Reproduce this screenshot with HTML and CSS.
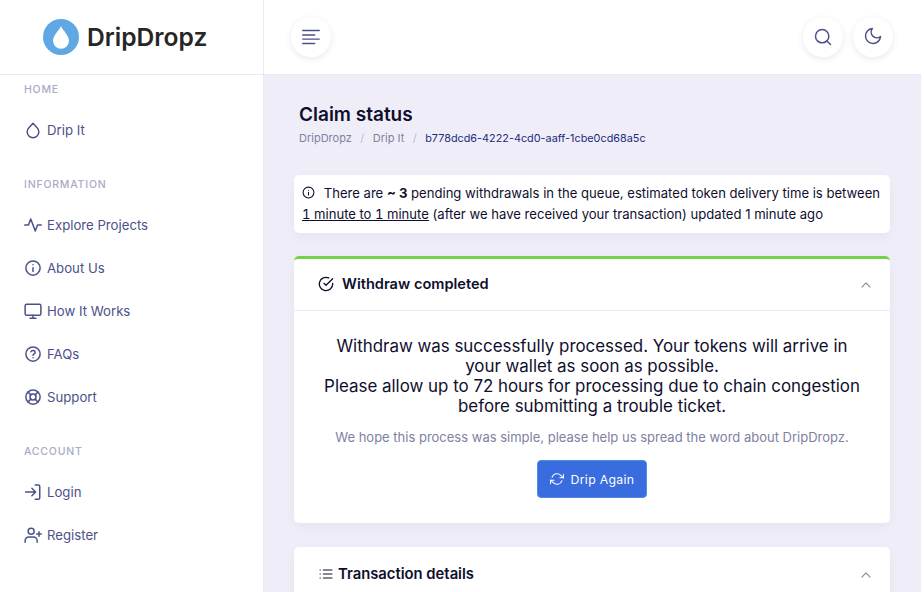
FILE: index.html
```html
<!DOCTYPE html>
<html lang="en">
<head>
    <meta charset="UTF-8">
    <meta name="viewport" content="width=device-width, initial-scale=1.0">
    <title>Claim status - DripDropz</title>
    <link rel="stylesheet" href="styles.css">
</head>
<body>
    <aside class="sidebar">
        <div class="brand">
            <svg class="brand-logo" viewBox="0 0 36 36">
                <circle cx="18" cy="18" r="18" fill="#5FA8E4"/>
                <path d="M18 7c-1.200 3.800-8 9.200-8 14.800a8 8 0 0 0 16 0C26 16.200 19.200 10.800 18 7z" fill="#fff"/>
            </svg>
            <span class="brand-name">DripDropz</span>
        </div>
        <nav class="nav">
            <div class="nav-title nav-title-first">HOME</div>
            <a class="nav-item">
                <svg class="icon" viewBox="0 0 24 24"><path d="M12 3l5.500 5.900a7.800 7.800 0 1 1-11 0z"/></svg>
                Drip It
            </a>
            <div class="nav-title">INFORMATION</div>
            <a class="nav-item">
                <svg class="icon" viewBox="0 0 24 24"><path d="M1 12h5l3-8 6 16 3-8h5"/></svg>
                Explore Projects
            </a>
            <a class="nav-item">
                <svg class="icon" viewBox="0 0 24 24"><circle cx="12" cy="12" r="9.500"/><path d="M12 16.500v-5M12 7.800v0"/></svg>
                About Us
            </a>
            <a class="nav-item">
                <svg class="icon" viewBox="0 0 24 24"><rect x="1.500" y="3" width="21" height="14.500" rx="2"/><path d="M8 21.500h8M12 17.500v4"/></svg>
                How It Works
            </a>
            <a class="nav-item">
                <svg class="icon" viewBox="0 0 24 24"><circle cx="12" cy="12" r="9.500"/><path d="M9.200 9a3 3 0 0 1 5.700 1c0 2-2.900 2.700-2.900 3.500M12 17v0"/></svg>
                FAQs
            </a>
            <a class="nav-item">
                <svg class="icon" viewBox="0 0 24 24"><circle cx="12" cy="12" r="9.500"/><circle cx="12" cy="12" r="4"/><path d="M5.300 5.300l3.900 3.900M14.800 14.800l3.900 3.900M18.700 5.300l-3.900 3.900M9.200 14.800l-3.900 3.900"/></svg>
                Support
            </a>
            <div class="nav-title">ACCOUNT</div>
            <a class="nav-item">
                <svg class="icon" viewBox="0 0 24 24"><path d="M15 2.500h4a2 2 0 0 1 2 2v15a2 2 0 0 1-2 2h-4M2 12h13M10.500 7l5 5-5 5"/></svg>
                Login
            </a>
            <a class="nav-item">
                <svg class="icon" viewBox="0 0 24 24"><circle cx="9.500" cy="7" r="4"/><path d="M1.500 21.500v-2a5 5 0 0 1 5-5h6a5 5 0 0 1 5 5v2M20 7.500v6M17 10.500h6"/></svg>
                Register
            </a>
        </nav>
    </aside>

    <div class="main">
        <header class="topbar">
            <button class="round-btn">
                <svg class="icon menu-icon" viewBox="0 0 24 24"><path d="M3 5h18M3 9.700h13M3 14.300h18M3 19h13"/></svg>
            </button>
            <div class="topbar-right">
                <button class="round-btn">
                    <svg class="icon topbar-icon" viewBox="0 0 24 24"><circle cx="11" cy="11" r="8"/><path d="M21 21l-4.300-4.300"/></svg>
                </button>
                <button class="round-btn moon-btn">
                    <svg class="icon topbar-icon" viewBox="0 0 24 24"><path d="M21 12.800A9 9 0 1 1 11.200 3 7 7 0 0 0 21 12.800z"/></svg>
                </button>
            </div>
        </header>

        <div class="content">
            <h1 class="page-title">Claim status</h1>
            <div class="breadcrumb">
                <span>DripDropz</span>
                <span class="sep">/</span>
                <span>Drip It</span>
                <span class="sep">/</span>
                <span class="current">b778dcd6-4222-4cd0-aaff-1cbe0cd68a5c</span>
            </div>

            <div class="notice">
                <svg class="icon notice-icon" viewBox="0 0 24 24"><circle cx="12" cy="12" r="10"/><path d="M12 16.500v-5M12 7.800v0"/></svg>
                There are <b>~ 3</b> pending withdrawals in the queue, estimated token delivery time is between
                <u>1 minute to 1 minute</u> (after we have received your transaction) updated 1 minute ago
            </div>

            <section class="card card-success">
                <div class="card-header">
                    <svg class="icon card-icon" viewBox="0 0 24 24"><path d="M22 11v1a10 10 0 1 1-5.900-9.100"/><path d="M22 4L12 14l-3-3"/></svg>
                    <h2 class="card-title">Withdraw completed</h2>
                    <svg class="icon chevron" viewBox="0 0 24 24"><path d="M5 15.500l7-7 7 7"/></svg>
                </div>
                <div class="card-body">
                    <p class="lead">Withdraw was successfully processed. Your tokens will arrive in your wallet as soon as possible.<br>Please allow up to 72 hours for processing due to chain congestion before submitting a trouble ticket.</p>
                    <p class="muted">We hope this process was simple, please help us spread the word about DripDropz.</p>
                    <button class="btn-primary">
                        <svg class="icon" viewBox="0 0 24 24"><path d="M23 4v6h-6M1 20v-6h6"/><path d="M3.500 9a9 9 0 0 1 14.900-3.400L23 10M1 14l4.600 4.400A9 9 0 0 0 20.500 15"/></svg>
                        Drip Again
                    </button>
                </div>
            </section>

            <section class="card">
                <div class="card-header card-header-plain">
                    <svg class="icon list-icon" viewBox="0 0 24 24"><path d="M8 6h13M8 12h13M8 18h13M3 6h.5M3 12h.5M3 18h.5"/></svg>
                    <h2 class="card-title">Transaction details</h2>
                    <svg class="icon chevron" viewBox="0 0 24 24"><path d="M5 15.500l7-7 7 7"/></svg>
                </div>
            </section>
        </div>
    </div>
</body>
</html>
```

FILE: styles.css
```css
* {
    box-sizing: border-box;
    margin: 0;
    padding: 0;
}

html, body {
    height: 100%;
    overflow: hidden;
}

body {
    display: flex;
    font-family: Inter, "Noto Sans", sans-serif;
    background-color: #fff;
    color: #0f0f2d;
}

.icon {
    width: 18px;
    height: 18px;
    fill: none;
    stroke: currentColor;
    stroke-width: 2;
    stroke-linecap: round;
    stroke-linejoin: round;
    flex-shrink: 0;
}

/* sidebar */
.sidebar {
    width: 264px;
    flex-shrink: 0;
    background-color: #fff;
    border-right: 1px solid #e9e9ef;
}

.brand {
    height: 75px;
    display: flex;
    align-items: center;
    gap: 8px;
    padding-left: 43px;
    border-bottom: 1px solid #e9e9ef;
}

.brand-logo {
    width: 36px;
    height: 36px;
}

.brand-name {
    font-size: 24.600px;
    font-weight: 600;
    color: #262626;
}

.nav {
    padding: 0 24px;
}

.nav-title {
    font-size: 10.500px;
    font-weight: 500;
    letter-spacing: 0.8px;
    line-height: 14px;
    color: #a9abc3;
    margin-top: 27px;
    margin-bottom: 11px;
}

.nav-title-first {
    margin-top: 8px;
}

.nav-item {
    height: 43px;
    display: flex;
    align-items: center;
    gap: 5px;
    font-size: 13.200px;
    color: #4d5189;
}

/* top bar */
.main {
    flex: 1;
    min-width: 0;
    background-color: #efeef8;
    border-right: 3px solid #fff;
}

.topbar {
    height: 75px;
    display: flex;
    align-items: center;
    justify-content: space-between;
    padding: 0 28px 0 27px;
    background-color: #fff;
    border-bottom: 1px solid #e9e9ef;
}

.topbar-right {
    display: flex;
    gap: 10px;
}

.round-btn {
    width: 40px;
    height: 40px;
    display: flex;
    align-items: center;
    justify-content: center;
    background-color: #fff;
    border: none;
    border-radius: 50%;
    color: #4d5189;
    box-shadow: 0 2px 6px rgba(40, 40, 90, 0.1);
}

.menu-icon {
    width: 22px;
    height: 22px;
    stroke-width: 1.600;
}

.topbar-icon {
    width: 20px;
    height: 20px;
    stroke-width: 1.800;
}

.moon-btn .icon {
    margin-top: -3px;
}

/* content */
.content {
    padding: 28px 31px 0 30px;
}

.page-title {
    font-size: 19px;
    font-weight: 600;
    line-height: 24px;
    margin-left: 5px;
}

.breadcrumb {
    display: flex;
    gap: 8.500px;
    margin: 2px 0 0 5px;
    font-size: 11px;
    line-height: 18px;
    color: #7e819f;
}

.sep {
    color: #b9bbcf;
}

.current {
    color: #1d2a7c;
    font-size: 10.850px;
}

.notice {
    margin-top: 28px;
    padding: 8px 4px 8px 8px;
    font-size: 13.100px;
    line-height: 21px;
    background-color: #fff;
    border-radius: 5px;
    box-shadow: 0 4px 12px rgba(40, 40, 90, 0.05);
}

.notice u {
    font-variant-numeric: tabular-nums;
}

.notice-icon {
    width: 13px;
    height: 13px;
    margin-right: 5px;
    vertical-align: -1px;
}

.card {
    margin-top: 23px;
    background-color: #fff;
    border-radius: 5px;
    box-shadow: 0 4px 12px rgba(40, 40, 90, 0.05);
}

.card-success {
    border-top: 3px solid #72d24a;
}

.card + .card {
    margin-top: 24px;
}

.card-header {
    height: 52px;
    display: flex;
    align-items: center;
    padding: 0 17px 0 24px;
    border-bottom: 1px solid #ececf2;
}

.card-header-plain {
    height: 55px;
    border-bottom: none;
}

.card-header-plain .card-title {
    font-size: 14.800px;
}

.card-icon {
    width: 16px;
    height: 16px;
    margin-right: 8px;
    margin-top: -2px;
}

.list-icon {
    width: 16px;
    height: 16px;
    margin-right: 4px;
    margin-top: -2px;
    stroke-width: 1.600;
}

.card-title {
    flex: 1;
    font-size: 14.600px;
    font-weight: 600;
    margin-top: -2px;
}

.chevron {
    width: 14px;
    height: 14px;
    color: #7e819f;
    stroke-width: 1.800;
}

.card-body {
    padding: 25px 24px 25px;
    text-align: center;
}

.lead {
    font-size: 16.900px;
    line-height: 20px;
}

.muted {
    margin-top: 11px;
    font-size: 13px;
    line-height: 20px;
    color: #7e819f;
}

.btn-primary {
    display: inline-flex;
    align-items: center;
    gap: 7px;
    height: 38px;
    margin-top: 13px;
    padding: 0 11.500px;
    font-family: inherit;
    font-size: 12.300px;
    letter-spacing: 0.3px;
    color: #fff;
    background-color: #396cdf;
    border: 1px solid #4b8ee0;
    border-radius: 4px;
}

.btn-primary .icon {
    width: 14px;
    height: 14px;
    stroke-width: 1.800;
}
```
